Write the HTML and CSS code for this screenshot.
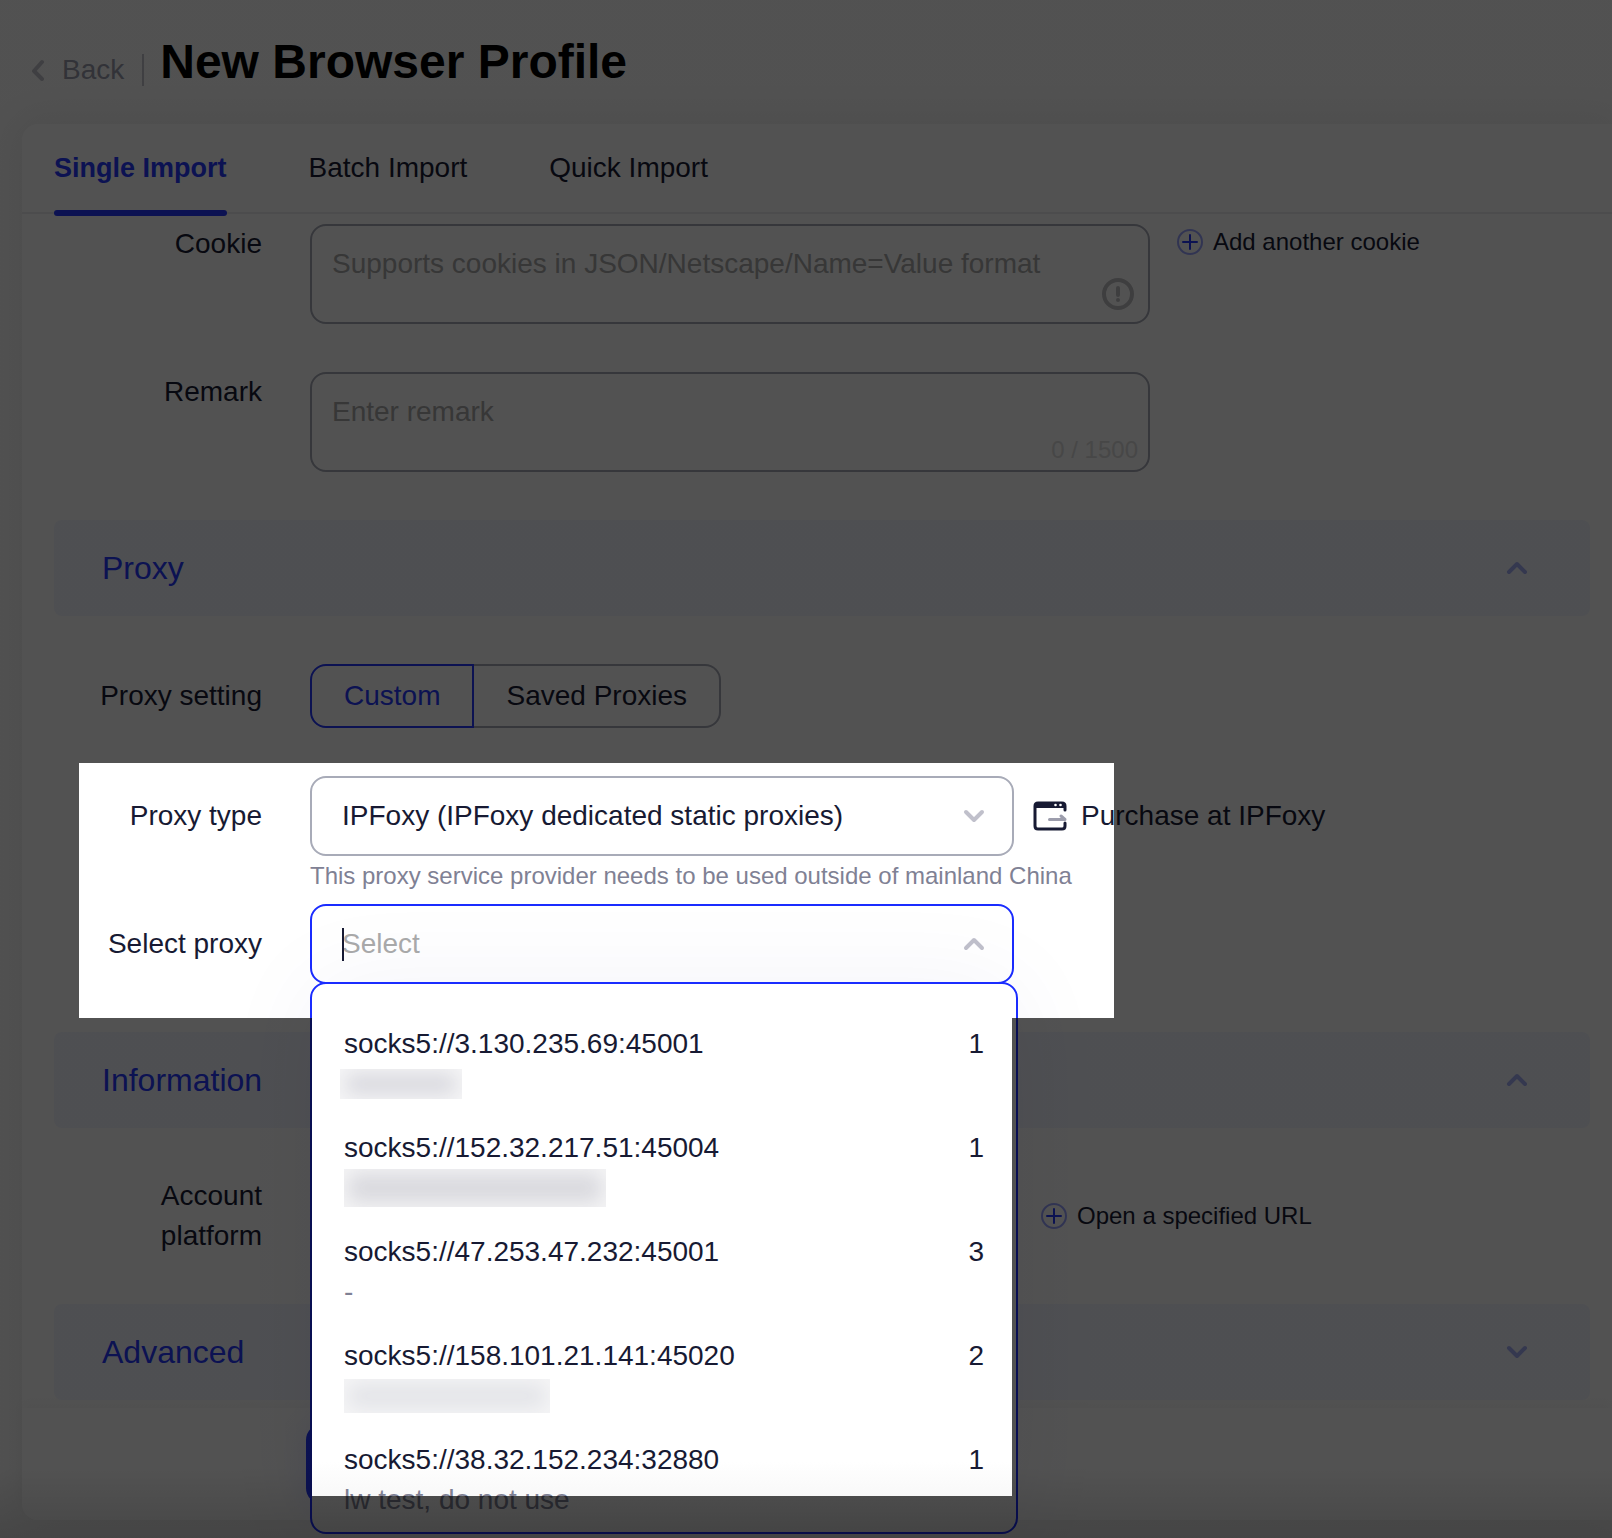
FILE: index.html
```
<!DOCTYPE html>
<html lang="en">

<head>
    <meta charset="UTF-8">
    <meta name="viewport" content="width=device-width, initial-scale=1.0">
    <title>New Browser Profile</title>
    <link rel="stylesheet" href="styles.css">
</head>

<body>
    <div class="page">
        <header class="header">
            <a href="#" class="back">
                <svg width="12" height="22" viewBox="0 0 12 22"><path d="M10 3L2 12l8 8" /></svg>
                <span>Back</span>
            </a>
            <h1>New Browser Profile</h1>
        </header>

        <main class="card">
            <nav class="tabs">
                <button type="button" class="tab active">Single Import</button>
                <button type="button" class="tab">Batch Import</button>
                <button type="button" class="tab">Quick Import</button>
            </nav>

            <form class="form">
                <div class="row">
                    <label class="label" for="cookie">Cookie</label>
                    <div class="area">
                        <textarea id="cookie" placeholder="Supports cookies in JSON/Netscape/Name=Value format"></textarea>
                        <svg class="tip" width="32" height="32" viewBox="0 0 32 32">
                            <circle cx="16" cy="16" r="14" />
                            <path d="M16 10v7M16 22v0" />
                        </svg>
                    </div>
                    <a href="#" class="addLink">
                        <svg width="26" height="26" viewBox="0 0 26 26"><circle cx="13" cy="13" r="12" /><path d="M13 6v14M6 13h14" /></svg>
                        <span>Add another cookie</span>
                    </a>
                </div>
                <div class="row">
                    <label class="label" for="remark">Remark</label>
                    <div class="area">
                        <textarea id="remark" placeholder="Enter remark"></textarea>
                        <span class="count">0 / 1500</span>
                    </div>
                </div>

                <button type="button" class="bar">
                    <span>Proxy</span>
                    <svg class="arrow" width="22" height="14" viewBox="0 0 22 14"><path d="M3 11l8-8 8 8" /></svg>
                </button>

                <div class="row middle">
                    <span class="label">Proxy setting</span>
                    <div class="group">
                        <button type="button" class="on">Custom</button>
                        <button type="button">Saved Proxies</button>
                    </div>
                </div>

                <div class="proxyRows">
                    <div class="row middle">
                        <label class="label" for="proxyType">Proxy type</label>
                        <div class="selectBox">
                            <select id="proxyType">
                                <option>IPFoxy (IPFoxy dedicated static proxies)</option>
                            </select>
                            <svg class="arrow" width="22" height="14" viewBox="0 0 22 14"><path d="M3 3l8 8 8-8" /></svg>
                        </div>
                        <a href="#" class="buy">
                            <svg width="34" height="30" viewBox="0 0 34 30">
                                <path class="frame" d="M32 9V5q0-3-3-3H5Q2 2 2 5v20q0 3 3 3h24q3 0 3-3v-3" />
                                <path class="top" d="M2 7V5q0-3 3-3h24q3 0 3 3v2z" />
                                <circle cx="22.5" cy="4" r="1.3" />
                                <circle cx="27.5" cy="4" r="1.3" />
                                <path class="go" d="M16.5 18.5H32L28 15" />
                            </svg>
                            <span>Purchase at IPFoxy</span>
                        </a>
                    </div>
                    <p class="helper">This proxy service provider needs to be used outside of mainland China</p>
                    <div class="row middle">
                        <label class="label" for="proxy">Select proxy</label>
                        <div class="selectBox open">
                            <input type="text" id="proxy" placeholder="Select" autocomplete="off">
                            <span class="caret"></span>
                            <svg class="arrow" width="22" height="14" viewBox="0 0 22 14"><path d="M3 11l8-8 8 8" /></svg>
                            <ul class="menu">
                                <li>
                                    <div class="name"><span>socks5://3.130.235.69:45001</span><span>1</span></div>
                                    <div class="note"><span class="hidden short"></span></div>
                                </li>
                                <li>
                                    <div class="name"><span>socks5://152.32.217.51:45004</span><span>1</span></div>
                                    <div class="note"><span class="hidden long"></span></div>
                                </li>
                                <li>
                                    <div class="name"><span>socks5://47.253.47.232:45001</span><span>3</span></div>
                                    <div class="note">-</div>
                                </li>
                                <li>
                                    <div class="name"><span>socks5://158.101.21.141:45020</span><span>2</span></div>
                                    <div class="note"><span class="hidden"></span></div>
                                </li>
                                <li>
                                    <div class="name"><span>socks5://38.32.152.234:32880</span><span>1</span></div>
                                    <div class="note">lw test, do not use</div>
                                </li>
                            </ul>
                        </div>
                    </div>
                </div>

                <button type="button" class="bar">
                    <span>Information</span>
                    <svg class="arrow" width="22" height="14" viewBox="0 0 22 14"><path d="M3 11l8-8 8 8" /></svg>
                </button>

                <div class="row middle">
                    <span class="label">Account platform</span>
                    <div class="platform"></div>
                    <a href="#" class="addLink">
                        <svg width="26" height="26" viewBox="0 0 26 26"><circle cx="13" cy="13" r="12" /><path d="M13 6v14M6 13h14" /></svg>
                        <span>Open a specified URL</span>
                    </a>
                </div>

                <button type="button" class="bar">
                    <span>Advanced</span>
                    <svg class="arrow" width="22" height="14" viewBox="0 0 22 14"><path d="M3 3l8 8 8-8" /></svg>
                </button>
            </form>

            <footer class="footer">
                <button type="button" class="submit"></button>
            </footer>
        </main>

        <!-- dark layer with the guide window cut out -->
        <div class="mask"></div>
    </div>
</body>

</html>
```
FILE: styles.css
```
* {
    box-sizing: border-box;
}

body {
    margin: 0;
    font-family: "Liberation Sans", Arial, sans-serif;
    font-size: 28px;
    line-height: 40px;
    color: #171a33;
}

button,
input,
select,
textarea {
    font: inherit;
    color: inherit;
    margin: 0;
    background: none;
}

a {
    color: inherit;
    text-decoration: none;
}

svg {
    flex: none;
    fill: none;
    stroke-linecap: round;
    stroke-linejoin: round;
}

.page {
    position: relative;
    min-height: 100vh;
    padding-bottom: 18px;
    background: #fdfdfd;
    overflow: hidden;
}

.header {
    display: flex;
    align-items: flex-end;
    gap: 16px;
    height: 124px;
    padding: 0 32px 38px;
}

.back {
    display: flex;
    align-items: center;
    gap: 18px;
    padding-right: 18px;
    border-right: 2px solid #c4c4cc;
    line-height: 32px;
    color: #9a9dad;
}

.back svg {
    stroke: #c4c4cc;
    stroke-width: 4;
}

h1 {
    margin: 0;
    font-size: 48px;
    line-height: 48px;
    color: #000;
}

.card {
    margin-left: 22px;
    border-radius: 16px 0 0 16px;
    background: #fff;
    box-shadow: 0 0 40px 8px rgba(0, 0, 0, 0.06);
}

.tabs {
    display: flex;
    gap: 82px;
    padding: 0 32px;
    border-bottom: 2px solid #ebebee;
}

.tab {
    position: relative;
    padding: 24px 0;
    border: none;
}

.tab.active {
    font-size: 27px;
    font-weight: bold;
    color: #2438ff;
}

.tab.active::after {
    content: "";
    position: absolute;
    left: 0;
    right: 0;
    bottom: -4px;
    height: 6px;
    border-radius: 3px;
    background: #2438ff;
}

/* form */
.form {
    display: flex;
    flex-direction: column;
    gap: 48px;
    padding: 10px 22px 8px 32px;
}

.row {
    display: flex;
    align-items: flex-start;
    padding-left: 32px;
}

.row.middle {
    align-items: center;
}

.label {
    flex: none;
    width: 176px;
    margin-right: 48px;
    text-align: right;
}

.area {
    position: relative;
    width: 840px;
}

textarea {
    display: block;
    width: 100%;
    height: 100px;
    padding: 18px 20px;
    border: 2px solid #a8abb8;
    border-radius: 16px;
    resize: none;
    overflow: hidden;
}

::placeholder {
    color: #aaa;
    opacity: 1;
}

.tip {
    position: absolute;
    right: 16px;
    bottom: 14px;
    stroke: #c0c0c4;
    stroke-width: 4;
}

.count {
    position: absolute;
    right: 12px;
    bottom: 2px;
    font-size: 24px;
    color: #dcdcdc;
}

.addLink {
    display: flex;
    align-items: center;
    gap: 10px;
    margin-left: 27px;
    font-size: 24px;
    line-height: 36px;
}

.addLink svg {
    stroke: #2438ff;
    stroke-width: 2;
}

.addLink circle {
    stroke: #98a2ff;
}

.bar {
    display: flex;
    justify-content: space-between;
    align-items: center;
    height: 96px;
    padding: 0 62px 0 48px;
    border: none;
    border-radius: 8px;
    background: #f3f6ff;
    font-size: 32px;
    color: #2438ff;
}

.arrow {
    stroke: #c0c0cb;
    stroke-width: 4;
}

.bar .arrow {
    stroke: #a3adf5;
}

.group {
    display: flex;
}

.group button {
    height: 64px;
    padding: 0 32px;
    border: 2px solid #a8abb8;
    border-left: none;
    border-radius: 0 16px 16px 0;
}

.group .on {
    border: 2px solid #2438ff;
    border-radius: 16px 0 0 16px;
    color: #2438ff;
}

/* proxy selects */
.selectBox {
    position: relative;
    width: 704px;
}

.selectBox select,
.selectBox input {
    display: block;
    width: 100%;
    height: 80px;
    padding: 0 72px 0 30px;
    border: 2px solid #a8abb8;
    border-radius: 16px;
    appearance: none;
    outline: none;
}

.selectBox.open input {
    border-color: #1a2cff;
}

.selectBox .arrow {
    position: absolute;
    right: 29px;
    top: 33px;
}

.caret {
    position: absolute;
    left: 32px;
    top: 24px;
    width: 2px;
    height: 33px;
    background: #171a33;
}

.buy {
    display: flex;
    align-items: center;
    gap: 14px;
    margin-left: 19px;
}

.buy .frame {
    stroke: #171a33;
    stroke-width: 3;
}

.buy .top {
    fill: #171a33;
}

.buy circle {
    fill: #fff;
}

.buy .go {
    stroke: #9c9dac;
    stroke-width: 3;
}

.helper {
    height: 48px;
    margin: 0;
    padding-left: 256px;
    font-size: 24px;
    color: #7f8194;
}

.menu {
    position: absolute;
    top: 78px;
    left: 0;
    z-index: 2;
    width: 708px;
    margin: 0;
    padding: 28px 32px 0;
    border: 2px solid #1a2cff;
    border-radius: 16px;
    background: #fff linear-gradient(to top, #f2f2f2, #fff 70px);
    box-shadow: 0 0 100px rgba(40, 40, 140, 0.05);
    list-style: none;
}

.menu li {
    padding: 12px 0;
}

.name {
    display: flex;
    justify-content: space-between;
}

.note {
    display: flex;
    align-items: center;
    height: 40px;
    color: #7f8194;
}

/* blurred account names */
.hidden {
    width: 206px;
    height: 34px;
    background: #e3e4e8;
    box-shadow: inset 0 0 20px 4px #f6f6f7;
}

.hidden.short {
    width: 122px;
    height: 30px;
    margin-left: -4px;
    background: #d3d3da;
    box-shadow: inset 0 0 20px 6px #f6f6f7;
}

.hidden.long {
    width: 262px;
    height: 38px;
    background: #d9d9de;
}

.platform {
    width: 704px;
}

.footer {
    padding: 16px 22px 16px 284px;
    border-radius: 0 0 0 16px;
    background: #fff;
    box-shadow: 0 -6px 12px rgba(0, 0, 0, 0.03);
}

.submit {
    display: block;
    width: 160px;
    height: 80px;
    border: none;
    border-radius: 16px;
    background: #2438ff;
    box-shadow: 0 0 32px rgba(36, 56, 255, 0.1);
}

.mask {
    position: absolute;
    inset: 0;
    z-index: 3;
    background: linear-gradient(to top, rgba(0, 0, 0, 0.72), rgba(0, 0, 0, 0.68) 70px);
    clip-path: polygon(evenodd, 0 0, 100% 0, 100% 100%, 0 100%, 0 0,
            79px 763px, 1114px 763px, 1114px 1018px, 1012px 1018px, 1012px 1496px,
            312px 1496px, 312px 1018px, 79px 1018px, 79px 763px, 0 0);
}
```
